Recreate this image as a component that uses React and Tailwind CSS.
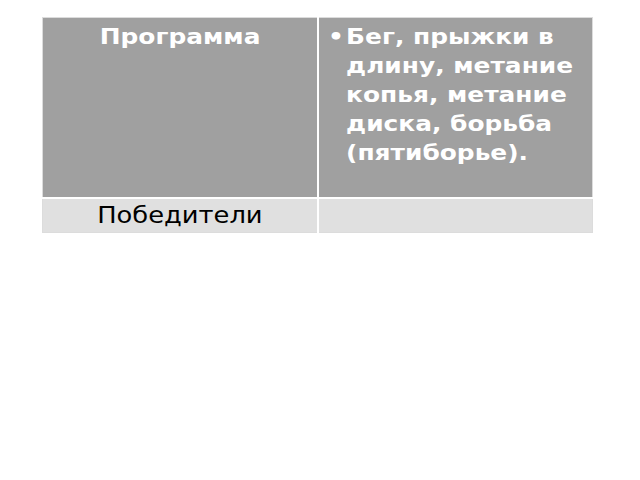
import React from 'react';

export default function App() {
    return (
        <div className="w-[640px] h-[480px] bg-white" style={{ fontFamily: '"DejaVu Sans", sans-serif' }}>
            <div className="pt-[17px] pl-[42px]">
                <table className="w-[551px] border-collapse border border-[#dcdcdc]">
                    <tbody>
                        <tr className="bg-[#a0a0a0]">
                            <td className="w-[275px] h-[180px] align-top text-center text-white font-bold text-[22px] leading-[29px] pt-[4px] border-r-2 border-b-2 border-white">
                                <span className="inline-block scale-x-[1.13] origin-center">Программа</span>
                            </td>
                            <td className="align-top text-white font-bold text-[22px] leading-[29px] pt-[4px] pl-[9px] border-b-2 border-white">
                                <div className="flex w-[232px] scale-x-[1.13] origin-left">
                                    <span className="w-[16px] shrink-0">•</span>
                                    <span>Бег, прыжки в длину, метание копья, метание диска, борьба (пятиборье).</span>
                                </div>
                            </td>
                        </tr>
                        <tr className="bg-[#e0e0e0]">
                            <td className="h-[35px] text-center text-black text-[23px] leading-[29px] border-r-2 border-white align-top pt-[2px]">
                                <span className="inline-block scale-x-[1.12] origin-center">Победители</span>
                            </td>
                            <td></td>
                        </tr>
                    </tbody>
                </table>
            </div>
        </div>
    );
}
